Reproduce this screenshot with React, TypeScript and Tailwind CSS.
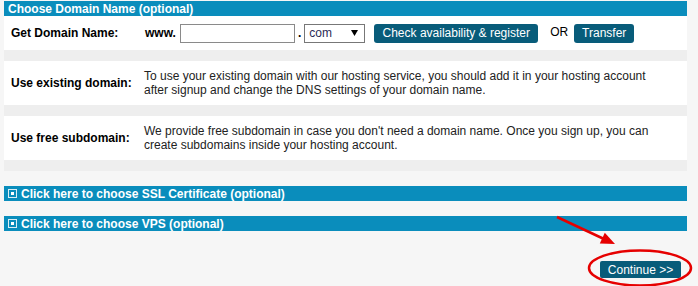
import React from "react";

const font = { fontFamily: '"Liberation Sans", Arial, sans-serif' };

const BarIcon = () => (
  <svg width="9" height="9" viewBox="0 0 9 9" className="shrink-0">
    <rect x="0.5" y="0.5" width="8" height="8" fill="none" stroke="#ffffff" strokeOpacity="0.85" />
    <rect x="3" y="3" width="3" height="3" fill="#ffffff" />
  </svg>
);

const CollapsedBar = ({ label }: { label: string }) => (
  <div className="h-[15px] bg-[#0a8dbc] flex items-center gap-[4px] pl-[4px] text-white font-bold leading-none cursor-pointer">
    <BarIcon />
    <span>{label}</span>
  </div>
);

const InfoRow = ({ label, lines }: { label: string; lines: string[] }) => (
  <div className="flex items-center bg-white h-[44px]">
    <div className="w-[140px] shrink-0 pl-[7px] font-bold text-black">{label}</div>
    <div className="pr-[6px] leading-[14px] text-[#222]">
      {lines.map((l, i) => (
        <div key={i} className="whitespace-nowrap">{l}</div>
      ))}
    </div>
  </div>
);

const App: React.FC = () => {
  return (
    <div className="relative w-[698px] h-[286px] bg-[#f6f6f6] text-[12px] overflow-hidden" style={font}>
      <div className="ml-[4px] w-[683px] pt-[1px]">
        {/* Domain section */}
        <div className="h-[15px] bg-[#0a8dbc] flex items-center pl-[4px] text-white font-bold leading-none">
          Choose Domain Name (optional)
        </div>
        <div className="bg-[#eeeeee] pb-[11px] flex flex-col gap-[11px]">
          <div className="flex items-center bg-white h-[34px]">
            <div className="w-[141px] shrink-0 pl-[7px] font-bold text-black">Get Domain Name:</div>
            <span className="font-bold text-black">www.</span>
            <input
              type="text"
              className="ml-[4px] w-[115px] h-[19px] border border-[#8a8a8a] bg-white outline-none"
            />
            <span className="mx-[3px] font-bold text-black">.</span>
            <div className="w-[61px] h-[19px] border border-[#777777] bg-white flex items-center justify-between pl-[4px] pr-[6px]">
              <span className="text-[#2b2b55]">com</span>
              <svg width="7" height="6" viewBox="0 0 7 6">
                <polygon points="0,0 7,0 3.5,6" fill="#000000" />
              </svg>
            </div>
            <button className="ml-[9px] w-[164px] h-[19px] rounded-[3px] bg-[#085c7a] text-white text-[12px] leading-none">
              Check availability &amp; register
            </button>
            <span className="ml-[12px] text-black -mt-[2px]">OR</span>
            <button className="ml-[6px] w-[60px] h-[19px] rounded-[3px] bg-[#085c7a] text-white text-[12px] leading-none">
              Transfer
            </button>
          </div>
          <InfoRow
            label="Use existing domain:"
            lines={[
              "To use your existing domain with our hosting service, you should add it in your hosting account",
              "after signup and change the DNS settings of your domain name.",
            ]}
          />
          <div className="-mt-0">
            <InfoRow
              label="Use free subdomain:"
              lines={[
                "We provide free subdomain in case you don't need a domain name. Once you sign up, you can",
                "create subdomains inside your hosting account.",
              ]}
            />
          </div>
        </div>

        <div className="mt-[15px] flex flex-col gap-[15px]">
          <CollapsedBar label="Click here to choose SSL Certificate (optional)" />
          <CollapsedBar label="Click here to choose VPS (optional)" />
        </div>

        <div className="mt-[30px] flex justify-end pr-[6px]">
          <button className="w-[81px] h-[17px] rounded-[2px] bg-[#085c7a] text-white text-[12px] leading-none">
            Continue &gt;&gt;
          </button>
        </div>
      </div>

      {/* annotation overlay */}
      <svg className="absolute inset-0 pointer-events-none" width="698" height="286" viewBox="0 0 698 286">
        <line x1="557" y1="217" x2="604" y2="239" stroke="#e60000" strokeWidth="2.5" />
        <polygon points="615,244 599.8,243.5 604.8,232.7" fill="#e60000" />
        <ellipse cx="640" cy="268" rx="51" ry="17.5" fill="none" stroke="#e60000" strokeWidth="2.5" />
      </svg>
    </div>
  );
};

export default App;
